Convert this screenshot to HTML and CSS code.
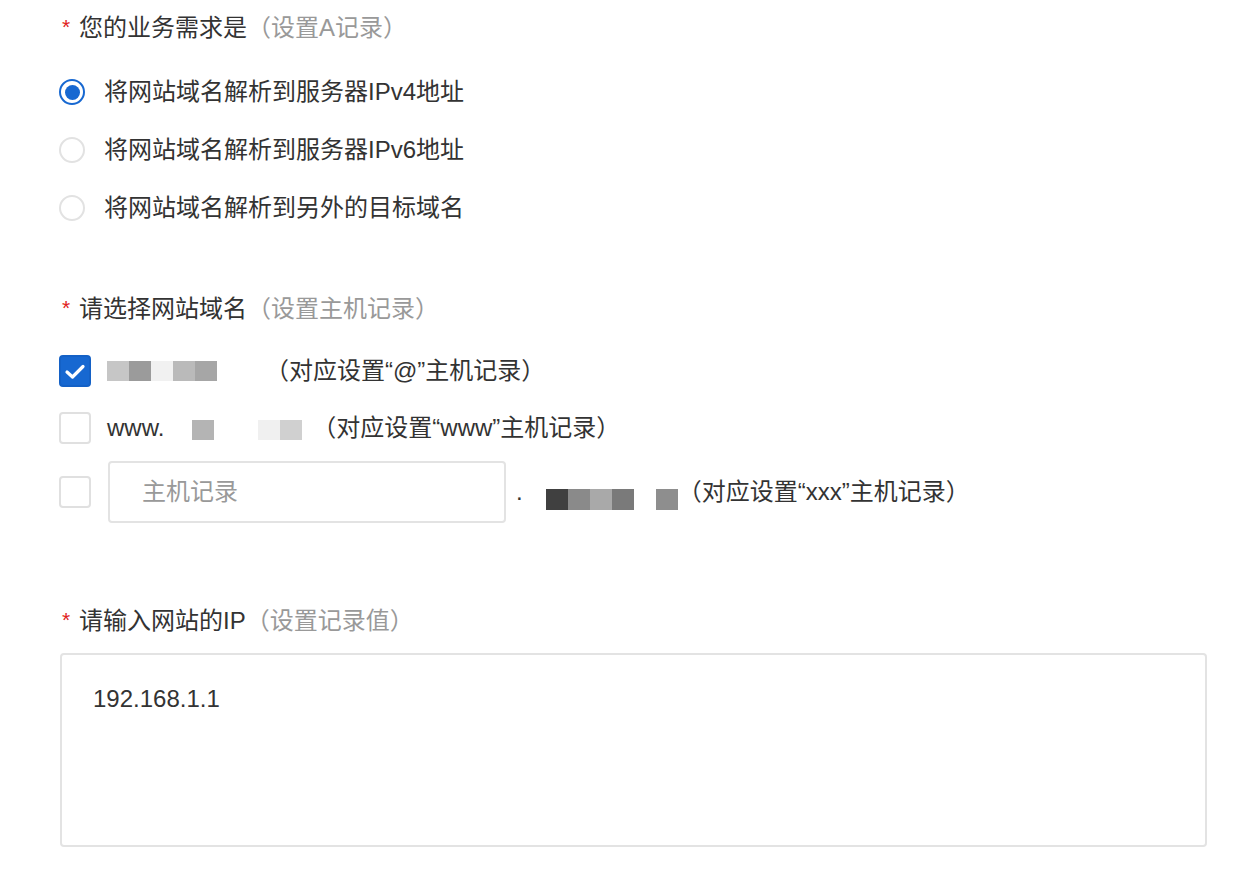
FILE: index.html
```html
<!DOCTYPE html>
<html lang="zh-CN">
<head>
  <meta charset="UTF-8">
  <meta name="viewport" content="width=device-width, initial-scale=1.0">
  <title>添加解析记录</title>
  <link rel="stylesheet" href="styles.css">
</head>
<body>
  <div class="form">

    <!-- 业务需求 -->
    <div class="field">
      <div class="label"><span class="req">*</span>您的业务需求是<span class="hint">（设置A记录）</span></div>
      <div class="radio-group">
        <div class="radio checked"><span class="radio-dot"></span>将网站域名解析到服务器IPv4地址</div>
        <div class="radio"><span class="radio-dot"></span>将网站域名解析到服务器IPv6地址</div>
        <div class="radio"><span class="radio-dot"></span>将网站域名解析到另外的目标域名</div>
      </div>
    </div>

    <!-- 主机记录 -->
    <div class="field field-host">
      <div class="label"><span class="req">*</span>请选择网站域名<span class="hint">（设置主机记录）</span></div>
      <div class="check-list">
        <div class="check-row row-root">
          <span class="checkbox checked">
            <svg width="22" height="22" viewBox="0 0 22 22"><polyline points="3,12 8.5,17 19,6.5" fill="none" stroke="#fff" stroke-width="3.2" stroke-linecap="round" stroke-linejoin="round"/></svg>
          </span>
          <span class="mosaic">
            <i class="px s1"></i><i class="px s2"></i><i class="px s3"></i><i class="px s4"></i><i class="px s5"></i>
          </span>
          <span class="note note-root">（对应设置“@”主机记录）</span>
        </div>
        <div class="check-row row-www">
          <span class="checkbox"></span>
          <span>www.</span>
          <span class="mosaic mosaic-www">
            <i class="px s6"></i><i class="px blank"></i><i class="px blank"></i><i class="px s7"></i><i class="px s8"></i>
          </span>
          <span class="note note-www">（对应设置“www”主机记录）</span>
        </div>
        <div class="check-row row-custom">
          <span class="checkbox"></span>
          <input class="host-input" type="text" placeholder="主机记录">
          <span class="dot">.</span>
          <span class="mosaic mosaic-custom">
            <i class="px s9"></i><i class="px s10"></i><i class="px s11"></i><i class="px s12"></i><i class="px blank"></i><i class="px s13"></i>
          </span>
          <span class="note">（对应设置“xxx”主机记录）</span>
        </div>
      </div>
    </div>

    <!-- 记录值 -->
    <div class="field field-ip">
      <div class="label"><span class="req">*</span>请输入网站的IP<span class="hint">（设置记录值）</span></div>
      <textarea class="ip-input">192.168.1.1</textarea>
    </div>

  </div>
</body>
</html>
```

FILE: styles.css
```css
/* Estilos generales */
body {
  margin: 0;
  background: #fff;
  color: #333;
  font-family: "Liberation Sans", "Noto Sans CJK SC", sans-serif;
  font-size: 24px;
  line-height: 34px;
}

.form {
  padding: 11px 38px 0 59px;
}

/* Títulos de cada campo */
.label {
  height: 34px;
  white-space: nowrap;
}

.req {
  display: inline-block;
  width: 17px;
  margin-left: 3px;
  color: #e02020;
  font-size: 21px;
  vertical-align: top;
  line-height: 32px;
}

.hint {
  color: #999;
}

/* Radios */
.radio-group {
  margin-top: 18px;
}

.radio {
  display: flex;
  align-items: center;
  height: 58px;
}

.radio-dot {
  position: relative;
  width: 26px;
  height: 26px;
  margin-right: 19px;
  border: 2px solid #e2e2e2;
  border-radius: 50%;
  box-sizing: border-box;
}

.radio.checked .radio-dot {
  border-color: #1768d1;
}

.radio.checked .radio-dot::after {
  content: "";
  position: absolute;
  top: 3.5px;
  left: 3.5px;
  width: 15px;
  height: 15px;
  border-radius: 50%;
  background: #1768d1;
}

/* Casillas */
.field-host {
  margin-top: 55px;
}

.check-list {
  margin-top: 29px;
}

.check-row {
  display: flex;
  align-items: center;
  height: 32px;
  white-space: nowrap;
}

.row-www {
  margin-top: 25px;
}

.row-custom {
  margin-top: 17px;
  height: 62px;
}

.checkbox {
  display: flex;
  align-items: center;
  justify-content: center;
  flex: none;
  width: 32px;
  height: 32px;
  margin-right: 16px;
  border: 2px solid #e0e0e0;
  border-radius: 4px;
  box-sizing: border-box;
}

.checkbox.checked {
  background: #1768d1;
  border-color: #1461c6;
}

/* Dominio pixelado */
.mosaic {
  display: flex;
}

.px {
  width: 22px;
  height: 20px;
}

.mosaic-www {
  margin-left: 28px;
  margin-top: 4px;
}

.mosaic-custom {
  margin-left: 23px;
  margin-top: 14px;
}

.mosaic-custom .px {
  height: 21px;
}

.s1 { background: #c6c6c6; }
.s2 { background: #9b9b9b; }
.s3 { background: #f1f1f1; }
.s4 { background: #bababa; }
.s5 { background: #a6a6a6; }
.s6 { background: #b4b4b4; }
.s7 { background: #f0f0f0; }
.s8 { background: #d0d0d0; }
.s9 { background: #404040; }
.s10 { background: #8a8a8a; }
.s11 { background: #a9a9a9; }
.s12 { background: #7a7a7a; }
.s13 { background: #8e8e8e; }

.note-root {
  margin-left: 48px;
}

.note-www {
  margin-left: 10px;
}

/* Campo de texto */
.host-input {
  width: 398px;
  height: 62px;
  margin-left: 1px;
  padding: 0 32px;
  border: 2px solid #e3e3e3;
  border-radius: 4px;
  box-sizing: border-box;
  font: inherit;
  color: #333;
  outline: none;
}

.host-input::placeholder {
  color: #999;
}

.dot {
  margin-left: 10px;
}

/* IP */
.field-ip {
  margin-top: 81px;
}

.ip-input {
  display: block;
  width: 100%;
  height: 194px;
  margin-top: 15px;
  margin-left: 1px;
  padding: 27px 31px;
  border: 2px solid #e3e3e3;
  border-radius: 4px;
  box-sizing: border-box;
  font: inherit;
  color: #333;
  resize: none;
  outline: none;
}
```
